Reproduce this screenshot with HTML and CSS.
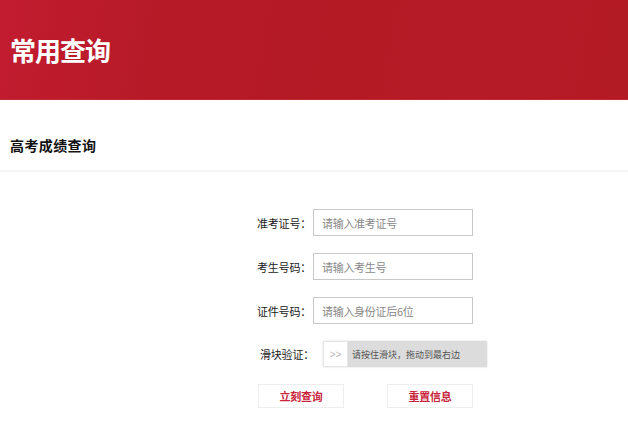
FILE: index.html
```html
<!DOCTYPE html>
<html>
	<head>
		<meta charset="utf-8">
		<title>常用查询</title>
		<link rel="stylesheet" href="styles.css">
	</head>
	<body>
		<div class="banner">
			<h1>常用查询</h1>
		</div>
		<div class="sub-title">
			<h2>高考成绩查询</h2>
		</div>
		<div class="form">
			<div class="row">
				<label>准考证号：</label>
				<input type="text" placeholder="请输入准考证号">
			</div>
			<div class="row">
				<label>考生号码：</label>
				<input type="text" placeholder="请输入考生号">
			</div>
			<div class="row">
				<label>证件号码：</label>
				<input type="text" placeholder="请输入身份证后6位">
			</div>
			<div class="row slide-row">
				<label>滑块验证：</label>
				<div class="slider">
					<span class="handle">&gt;&gt;</span>
					<span class="tip">请按住滑块，拖动到最右边</span>
				</div>
			</div>
			<div class="btns">
				<a href="" class="btn">立刻查询</a>
				<a href="" class="btn">重置信息</a>
			</div>
		</div>
	</body>
</html>
```

FILE: styles.css
```css
*{margin: 0;padding: 0;box-sizing: border-box;}
body{
	font-family: "Noto Sans CJK SC", "Noto Sans", sans-serif;
	background: #fff;
	color: #333;
}
.banner{
	height: 100px;
	display: flex;
	align-items: center;
	padding-left: 10px;
	background: linear-gradient(100deg, #c21c30 0%, #b61a27 25%, #b31a24 55%, #b51b26 75%, #b21a24 100%);
	border-bottom: 1px solid #c42a36;
}
.banner h1{
	color: #fff;
	font-size: 26px;
	font-weight: bold;
	letter-spacing: -1px;
	line-height: 32px;
}
.sub-title{
	padding: 35px 10px 14px;
	border-bottom: 2px solid #f5f5f5;
}
.sub-title h2{
	font-size: 14px;
	line-height: 21px;
	font-weight: bold;
	letter-spacing: 0.4px;
	color: #111;
}
.form{
	padding-top: 37px;
}
.row{
	display: flex;
	align-items: center;
	margin-bottom: 17px;
}
.row label{
	width: 313px;
	padding-right: 2px;
	text-align: right;
	font-size: 11px;
	letter-spacing: -0.2px;
	color: #222;
}
.row input{
	width: 160px;
	height: 27px;
	border: 1px solid #c8c8c8;
	padding-left: 8px;
	font-size: 11px;
	letter-spacing: -0.3px;
	font-family: inherit;
	outline: none;
}
.row input::placeholder{
	color: #888;
}
.slide-row label{
	width: 323px;
	padding-right: 9px;
}
.slider{
	width: 164px;
	height: 26px;
	background: #dcdcdc;
	display: flex;
	align-items: center;
	box-shadow: 0 0 2px rgba(0,0,0,0.15);
}
.slider .handle{
	width: 25px;
	height: 26px;
	background: #fff;
	color: #bbb;
	font-size: 10px;
	font-family: "Liberation Sans", sans-serif;
	text-align: center;
	line-height: 26px;
	border: 1px solid #e6e6e6;
}
.slider .tip{
	padding-left: 4px;
	font-size: 9px;
	color: #555;
}
.btns{
	display: flex;
	padding-left: 258px;
	gap: 43px;
	margin-top: 1px;
}
.btn{
	width: 86px;
	height: 24px;
	border: 1px solid #eee;
	text-align: center;
	line-height: 22px;
	font-size: 11px;
	font-weight: bold;
	letter-spacing: -0.3px;
	color: #c9263c;
	text-decoration: none;
}
```
